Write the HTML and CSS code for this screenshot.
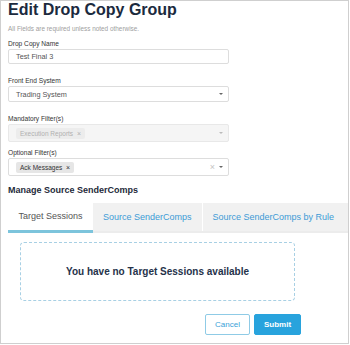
FILE: index.html
```html
<!DOCTYPE html>
<html lang="en">
<head>
    <meta charset="UTF-8">
    <meta name="viewport" content="width=device-width, initial-scale=1.0">
    <title>Edit Drop Copy Group</title>
    <link rel="stylesheet" href="styles.css">
</head>
<body>
    <div class="frame">
        <h1 class="title">Edit Drop Copy Group</h1>
        <p class="note">All Fields are required unless noted otherwise.</p>

        <div class="field first">
            <label class="label">Drop Copy Name</label>
            <div class="input">Test Final 3</div>
        </div>

        <div class="field">
            <label class="label">Front End System</label>
            <div class="input select">
                <span class="value">Trading System</span>
                <span class="arrow"></span>
            </div>
        </div>

        <div class="field">
            <label class="label">Mandatory Filter(s)</label>
            <div class="input multi disabled">
                <span class="tag">Execution Reports <span class="x">&times;</span></span>
                <span class="arrow"></span>
            </div>
        </div>

        <div class="field tight">
            <label class="label">Optional Filter(s)</label>
            <div class="input multi">
                <span class="tag">Ack Messages <span class="x">&times;</span></span>
                <span class="clear">&times;</span>
                <span class="arrow"></span>
            </div>
        </div>

        <h2 class="section">Manage Source SenderComps</h2>

        <div class="tabs">
            <div class="tab active">Target Sessions</div>
            <div class="tab">Source SenderComps</div>
            <div class="tab last">Source SenderComps by Rule</div>
        </div>

        <div class="empty">You have no Target Sessions available</div>

        <div class="actions">
            <button class="btn cancel">Cancel</button>
            <button class="btn submit">Submit</button>
        </div>
    </div>
</body>
</html>
```

FILE: styles.css
```css
* {
    box-sizing: border-box;
}

body {
    margin: 0;
    font-family: "Liberation Sans", Arial, sans-serif;
    color: #333;
}

.frame {
    width: 349px;
    height: 344px;
    border: 1px solid #cfcfcf;
    padding: 0 0 0 7px;
    overflow: hidden;
}

.title {
    margin: 0;
    font-size: 16px;
    line-height: 18px;
    font-weight: bold;
    color: #1b2a3e;
}

.note {
    margin: 6px 0 0;
    font-size: 6.4px;
    line-height: 8px;
    color: #a0a0a0;
}

.field {
    margin-top: 13px;
}

.field.first {
    margin-top: 7px;
}

.field.tight {
    margin-top: 7px;
}

.label {
    display: block;
    font-size: 6.6px;
    line-height: 8px;
    color: #333;
}

.input {
    position: relative;
    width: 221px;
    height: 15px;
    margin-top: 1px;
    border: 1px solid #ddd;
    border-radius: 2px;
    padding: 0 7px;
    font-size: 7.3px;
    line-height: 13px;
    color: #555;
    display: flex;
    align-items: center;
}

.select {
    height: 16px;
}

.multi {
    height: 18px;
}

.disabled {
    background: #f5f5f5;
    border-color: #e8e8e8;
}

.arrow {
    position: absolute;
    right: 5px;
    top: 50%;
    margin-top: -1px;
    border-left: 2px solid transparent;
    border-right: 2px solid transparent;
    border-top: 2.5px solid #666;
}

.disabled .arrow {
    border-top-color: #bbb;
}

.clear {
    position: absolute;
    right: 13px;
    top: 0;
    font-size: 9px;
    line-height: 16px;
    color: #c4c4c4;
}

.tag {
    height: 11px;
    padding: 0 4px;
    background: #e6e6e6;
    border-radius: 2px;
    font-size: 6.5px;
    line-height: 11px;
    color: #333;
}

.tag .x {
    margin-left: 2px;
    font-size: 7px;
}

.disabled .tag {
    background: #ececec;
    color: #b0b0b0;
}

.section {
    margin: 9px 0 0;
    font-size: 9px;
    line-height: 10px;
    font-weight: bold;
    color: #1e2a3a;
}

.tabs {
    display: flex;
    height: 30px;
    margin-top: 8px;
    border-bottom: 2px solid #ececec;
}

.tab {
    padding: 0 10px;
    font-size: 9px;
    line-height: 28px;
    white-space: nowrap;
    color: #3d9bd6;
    background: #f1f1f1;
    margin-bottom: -2px;
    border-bottom: 2px solid #ececec;
}

.tab.active {
    width: 85px;
    padding: 0;
    text-align: center;
    background: #fff;
    color: #555;
    border-bottom: 3px solid #7cc4dc;
    line-height: 27px;
}

.tab.last {
    flex: 1;
    margin-left: 1px;
}

.empty {
    width: 275px;
    height: 59px;
    margin: 9px 0 0 12px;
    border: 1px dashed #a8d0e4;
    border-radius: 4px;
    display: flex;
    align-items: center;
    justify-content: center;
    font-size: 10px;
    font-weight: bold;
    color: #25324a;
}

.actions {
    width: 293px;
    margin-top: 13px;
    display: flex;
    justify-content: flex-end;
    gap: 4px;
}

.btn {
    height: 21px;
    border-radius: 2px;
    font-family: "Liberation Sans", Arial, sans-serif;
    font-size: 8px;
    padding: 0;
    cursor: pointer;
}

.cancel {
    width: 45px;
    background: #fff;
    border: 1px solid #8fcbe6;
    color: #3a9fd8;
}

.submit {
    width: 47px;
    background: #28a3dd;
    border: 1px solid #28a3dd;
    color: #fff;
    font-weight: bold;
}
```
